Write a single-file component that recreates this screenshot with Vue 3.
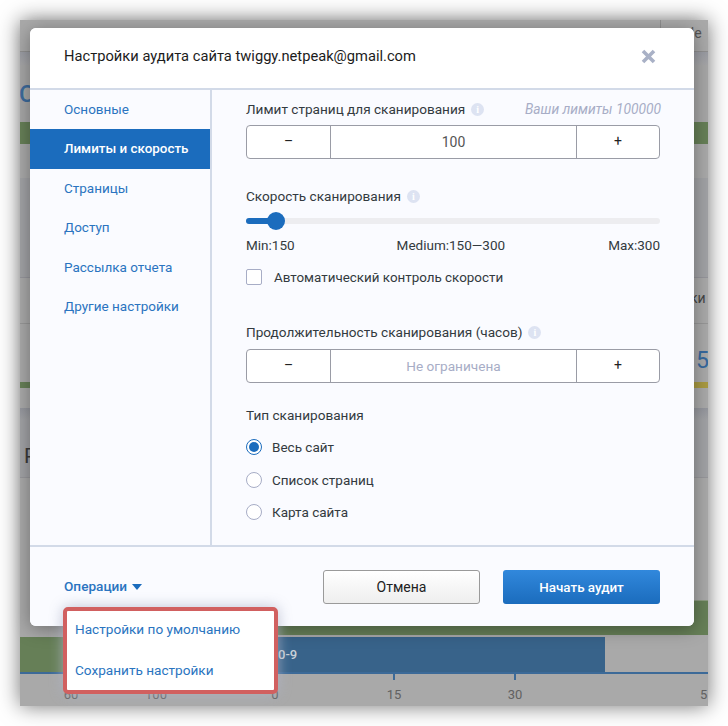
<script setup>
const nav = ['Основные', 'Лимиты и скорость', 'Страницы', 'Доступ', 'Рассылка отчета', 'Другие настройки']
const radios = [
  { label: 'Весь сайт', on: true },
  { label: 'Список страниц', on: false },
  { label: 'Карта сайта', on: false },
]
</script>

<template>
  <div class="page">
    <div class="stage">
      <div class="bg-top">
        <span class="gle">gle</span>
      </div>
      <div class="bg-shade"></div>
      <div class="bg-c">С</div>
      <div class="bg-green"></div>
      <div class="bg-g1"></div>
      <div class="bg-g2"></div>
      <div class="bg-g3"><span class="ki">ки</span></div>
      <div class="bg-g4"><span class="five">5</span></div>
      <div class="bg-strip"></div>
      <div class="bg-g5"></div>
      <div class="bg-p"><span>Р</span></div>
      <div class="bg-g6"></div>
      <div class="bg-green2"></div>
      <div class="bg-gap"></div>
      <div class="bars">
        <div class="bar-green"></div>
        <div class="bar-blue">0-9</div>
      </div>
      <div class="axis">
        <i class="tick t1"></i><i class="tick t2"></i>
      </div>
      <div class="labels">
        <span class="l l60">60</span><span class="l l100">100</span><span class="l l0">0</span>
        <span class="l l15">15</span><span class="l l30">30</span><span class="l l5">5</span>
      </div>

      <div class="modal">
        <header class="head">
          <h1>Настройки аудита сайта twiggy.netpeak@gmail.com</h1>
          <svg class="close" width="15" height="15" viewBox="0 0 15 15"><path d="M2 2 13 13M13 2 2 13" stroke="#a9b1c6" stroke-width="3.6" fill="none"/></svg>
        </header>
        <div class="body">
          <nav class="side">
            <a v-for="(n, i) in nav" :key="n" :class="['item', { active: i === 1 }]">{{ n }}</a>
          </nav>
          <main class="content">
            <div class="lab-row first">
              <span class="lab">Лимит страниц для сканирования</span>
              <span class="info">i</span>
              <em class="limits">Ваши лимиты 100000</em>
            </div>
            <div class="stepper">
              <span class="st-btn">–</span>
              <span class="st-val">100</span>
              <span class="st-btn plus">+</span>
            </div>

            <div class="lab-row speed">
              <span class="lab">Скорость сканирования</span>
              <span class="info">i</span>
            </div>
            <div class="slider"><div class="fill"></div><div class="knob"></div></div>
            <div class="scale"><span>Min:150</span><span class="med">Medium:150—300</span><span>Max:300</span></div>
            <label class="check"><span class="box"></span>Автоматический контроль скорости</label>

            <div class="lab-row dur">
              <span class="lab">Продолжительность сканирования (часов)</span>
              <span class="info">i</span>
            </div>
            <div class="stepper">
              <span class="st-btn">–</span>
              <span class="st-val muted">Не ограничена</span>
              <span class="st-btn plus">+</span>
            </div>

            <div class="lab type">Тип сканирования</div>
            <div v-for="r in radios" :key="r.label" class="radio">
              <span :class="['dot', { on: r.on }]"></span>{{ r.label }}
            </div>
          </main>
        </div>
        <footer class="foot">
          <a class="ops">Операции<i class="caret"></i></a>
          <div class="actions">
            <button class="btn cancel">Отмена</button>
            <button class="btn start">Начать аудит</button>
          </div>
        </footer>
      </div>

      <div class="menu">
        <a>Настройки по умолчанию</a>
        <a>Сохранить настройки</a>
      </div>
    </div>
  </div>
</template>

<style>
html, body { margin: 0; background: #fff; }
</style>

<style scoped>
.page { width: 728px; height: 726px; padding: 20px; box-sizing: border-box; overflow: hidden; font-family: Roboto, "Liberation Sans", sans-serif; }
.stage { position: relative; width: 688px; height: 686px; background: #a9a9a9; box-shadow: 0 0 20px rgba(0,0,0,.55); overflow: visible; }
.stage > div:not(.modal):not(.menu) { overflow: hidden; }

.bg-top { height: 31px; border-bottom: 1px solid #8f8f8f; box-sizing: content-box; background: linear-gradient(90deg, #a9a9a9 640px, #8f8f8f 640px, #8f8f8f 641px, #a9a9a9 641px); position: relative; color: #555; font-size: 14px; }
.gle { position: absolute; left: 663px; top: 5px; }
.bg-shade { height: 13px; background: linear-gradient(#9a9ca3, #a5a5a7); }
.bg-c { height: 57px; background: #a6a6a6; color: #3d6b9c; font-size: 24px; font-weight: 500; line-height: 58px; text-indent: -1px; }
.bg-green { height: 22px; background: #667f57; }
.bg-g1 { height: 34px; background: #a9a9a9; }
.bg-g2 { height: 99px; background: #a1a2a5; border-bottom: 1px solid #95959b; }
.bg-g3 { height: 45px; background: #a9a9a9; border-bottom: 1px solid #979797; position: relative; color: #444; font-size: 14px; }
.ki { position: absolute; left: 670px; top: 12px; }
.bg-g4 { height: 58px; background: #a9a9a9; position: relative; color: #36689d; font-size: 23px; }
.five { position: absolute; left: 676px; top: 23px; }
.bg-strip { height: 6px; background: linear-gradient(90deg, #667f57 50%, #a99a42 50%); }
.bg-g5 { height: 20px; background: #a9a9a9; }
.bg-p { height: 69px; background: linear-gradient(#94969d, #a1a2a5 12px); border-bottom: 1px solid #97979b; color: #3a3a3a; font-size: 21px; position: relative; }
.bg-p span { position: absolute; left: 4px; top: 36px; }
.bg-g6 { height: 122px; background: #a9a9a9; }
.bg-green2 { height: 35px; margin-left: 100px; background: #667f57; border-top: 1px solid #8c9b80; box-sizing: border-box; }
.bg-gap { height: 2px; }
.bars { height: 35px; display: flex; }
.bar-green { width: 60px; background: #667f57; }
.bar-blue { width: 525px; background: #38638a; color: #c9d1d8; font-size: 13px; font-weight: 500; line-height: 35px; padding-left: 198px; box-sizing: border-box; }
.axis { height: 2px; background: #3c6a98; position: relative; overflow: visible !important; }
.tick { position: absolute; top: 2px; width: 2px; height: 6px; background: #3c6a98; }
.t1 { left: 373px; } .t2 { left: 494px; }
.labels { position: relative; height: 30px; color: #616161; font-size: 13px; }
.l { position: absolute; top: 13px; transform: translateX(-50%); }
.l60 { left: 51px; } .l100 { left: 136px; } .l0 { left: 255px; } .l15 { left: 374px; } .l30 { left: 495px; } .l5 { left: 680px; transform: none; }

.modal { position: absolute; left: 10px; top: 8px; width: 664px; height: 598px; background: #fafbff; border-radius: 6px; box-shadow: 0 3px 18px rgba(0,0,0,.35); display: flex; flex-direction: column; overflow: hidden; }
.head { height: 62px; flex: none; background: #fff; border-bottom: 2px solid #d2dae8; display: flex; align-items: center; justify-content: space-between; padding: 0 38px 4px 34px; box-sizing: border-box; }
.head h1 { margin: 0; font-size: 14.7px; font-weight: 400; color: #1c1c1c; }
.close { display: block; }
.body { height: 455px; flex: none; display: flex; border-bottom: 2px solid #d2dae8; }
.side { width: 180px; flex: none; border-right: 2px solid #d2dae8; display: flex; flex-direction: column; box-sizing: content-box; }
.item { height: 39.4px; line-height: 38px; padding-left: 34px; font-size: 13.5px; color: #2a74c0; }
.item.active { background: #1b6cbd; color: #fff; font-weight: 500; font-size: 13.4px; line-height: 39px; }
.content { flex: 1; padding: 0 34px; color: #333; font-size: 13.5px; }
.lab-row { display: flex; align-items: center; }
.lab-row.first { height: 35px; padding-top: 3px; box-sizing: border-box; }
.lab { font-size: 13.6px; color: #333a40; }
.info { width: 13px; height: 13px; border-radius: 50%; background: #dde3f2; color: #fff; font-size: 10px; font-weight: 700; text-align: center; line-height: 13px; margin-left: 6px; font-family: "Liberation Serif", serif; }
.limits { margin-left: auto; font-size: 13.8px; color: #a7adc6; margin-right: -1px; }
.stepper { height: 34px; display: flex; border: 1px solid #9a9ca6; border-radius: 4px; background: #fff; box-sizing: border-box; }
.st-btn { width: 83px; flex: none; text-align: center; line-height: 30px; font-size: 14px; color: #222; border-right: 1px solid #9a9ca6; }
.st-btn.plus { border-right: 0; border-left: 1px solid #9a9ca6; box-sizing: border-box; }
.st-val { flex: 1; text-align: center; line-height: 32px; color: #555; font-size: 14px; }
.st-val.muted { color: #a7adc6; font-size: 13.6px; }
.lab-row.speed { margin-top: 27px; height: 20px; }
.slider { position: relative; height: 6px; margin-top: 12px; background: #ededf0; border-radius: 3px; }
.fill { width: 30px; height: 100%; background: #1b6cbd; border-radius: 3px; }
.knob { position: absolute; left: 21px; top: -6px; width: 18px; height: 18px; border-radius: 50%; background: #1b6cbd; }
.scale { display: flex; justify-content: space-between; margin-top: 11px; height: 20px; line-height: 20px; color: #333a40; }
.med { margin-left: -1px; }
.check { display: flex; align-items: center; margin-top: 12px; height: 20px; color: #333a40; font-size: 13.4px; }
.box { width: 14px; height: 14px; border: 1px solid #a7adc6; border-radius: 2px; background: #fff; margin-right: 12px; }
.lab-row.dur { margin-top: 35px; height: 20px; }
.dur + .stepper { margin-top: 7px; }
.lab.type { margin-top: 22px; height: 20px; line-height: 20px; }
.radio { display: flex; align-items: center; height: 20px; margin-top: 12.5px; color: #333a40; font-size: 13.5px; }
.lab.type + .radio { margin-top: 12px; }
.dot { width: 14px; height: 14px; border: 1px solid #a7adc6; border-radius: 50%; background: #fff; margin-right: 10px; position: relative; }
.dot.on { border-color: #1b6cbd; }
.dot.on::after { content: ""; position: absolute; inset: 2px; border-radius: 50%; background: #1b6cbd; }
.foot { flex: 1; display: flex; align-items: center; justify-content: space-between; padding: 0 34px; background: #fafbff; }
.ops { color: #2a74c0; font-size: 13.6px; font-weight: 500; display: flex; align-items: center; margin-top: -2px; }
.caret { width: 0; height: 0; border: 5px solid transparent; border-top: 6px solid #1b6cbd; border-bottom: 0; margin-left: 5px; margin-top: 2px; }
.actions { display: flex; gap: 23px; margin-top: 1px; }
.btn { height: 34px; border-radius: 3px; font: 500 13.8px Roboto, "Liberation Sans", sans-serif; box-sizing: border-box; }
.cancel { width: 157px; border: 1px solid #9a9a9a; background: linear-gradient(#fff, #eee); color: #222; font-weight: 400; font-size: 14px; }
.start { width: 157px; border: 0; background: linear-gradient(#3188dc, #1b6cbd); color: #fff; font-size: 13.4px; }
.menu { position: absolute; left: 43px; top: 587px; width: 207px; height: 79px; border: 4px solid #d16060; border-radius: 5px; background: #fff; display: flex; flex-direction: column; gap: 5px; box-shadow: 0 0 14px rgba(175,180,200,.8); }
.menu a { height: 36px; line-height: 36px; padding-left: 8px; color: #2a74c0; font-size: 13.6px; }
</style>
